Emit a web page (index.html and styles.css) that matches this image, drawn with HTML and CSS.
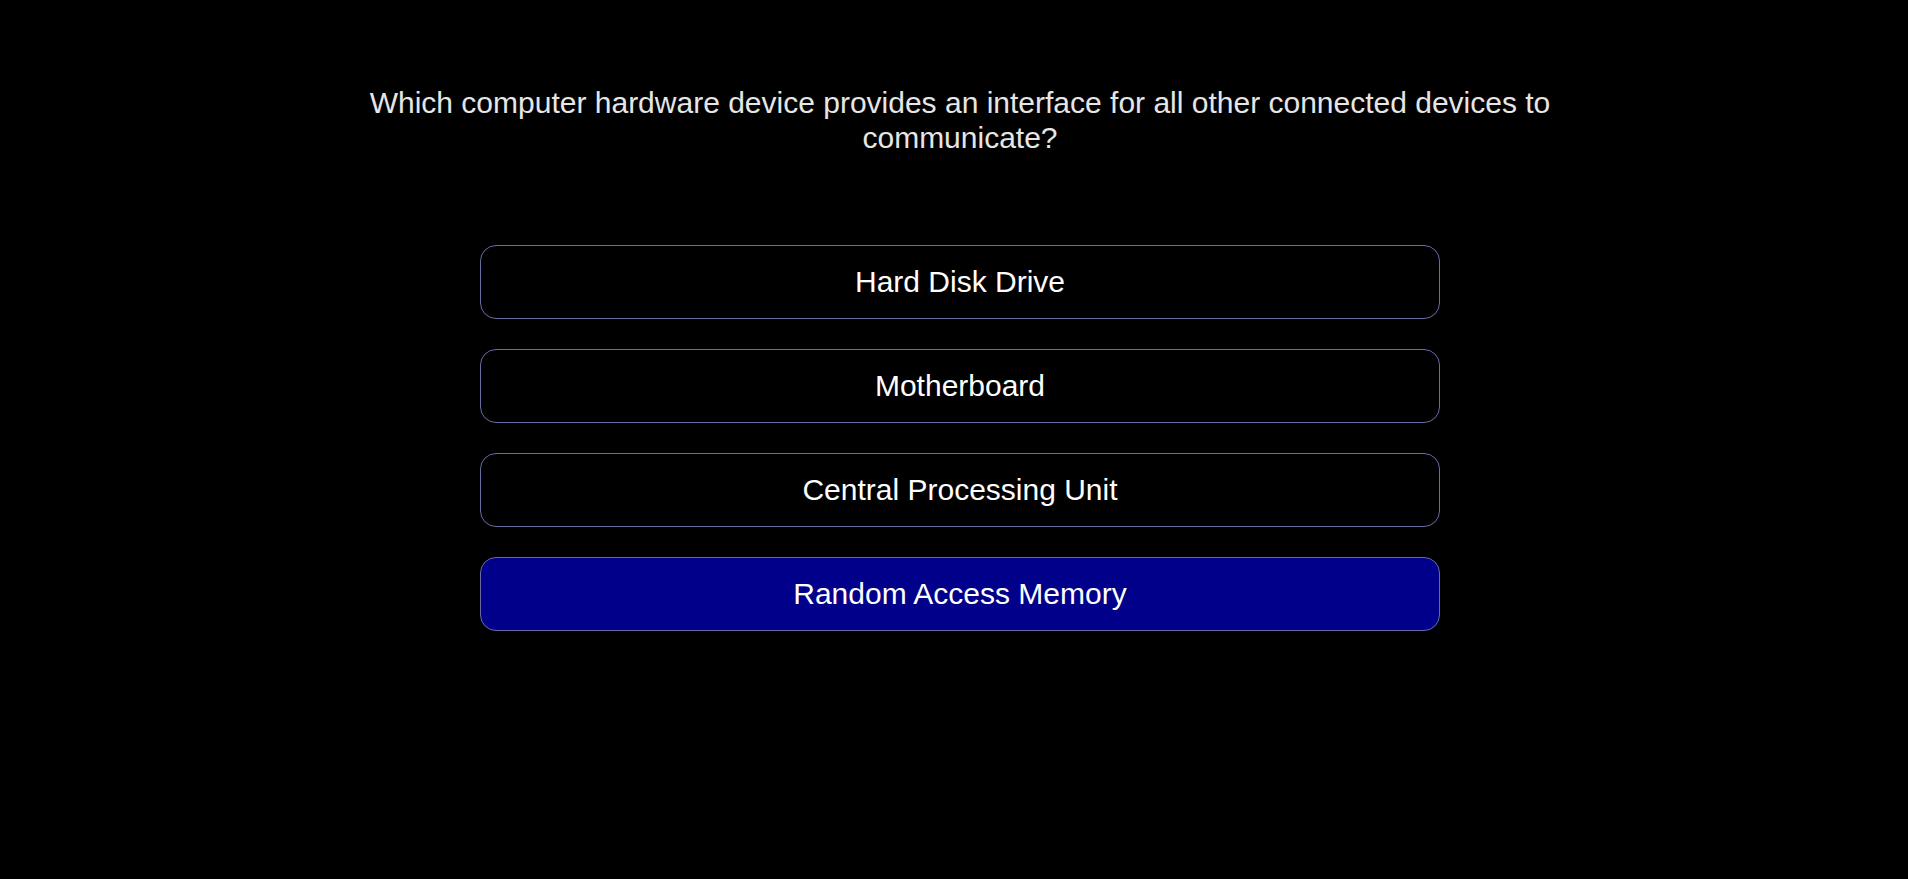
FILE: index.html
```html
<!DOCTYPE html>
<html lang="en">
<head>
<meta charset="utf-8">
<title>Quiz</title>
<link rel="stylesheet" href="styles.css">
</head>
<body>
<main class="quiz">
  <h1 class="question">Which computer hardware device provides an interface for all other connected devices to communicate?</h1>
  <div class="answers">
    <button class="answer">Hard Disk Drive</button>
    <button class="answer">Motherboard</button>
    <button class="answer">Central Processing Unit</button>
    <button class="answer answer-selected">Random Access Memory</button>
  </div>
</main>
</body>
</html>
```

FILE: styles.css
```css
html, body {
  margin: 0;
  padding: 0;
  background: #000;
}

body {
  font-family: "Liberation Sans", Arial, sans-serif;
  min-height: 879px;
}

.quiz {
  display: flex;
  flex-direction: column;
  align-items: center;
  padding: 86px 0 0 12px;
}

.question {
  margin: 0;
  max-width: 1240px;
  font-size: 30px;
  font-weight: normal;
  line-height: 34.5px;
  color: #e6e6e6;
  text-align: center;
}

.answers {
  display: flex;
  flex-direction: column;
  align-items: center;
  gap: 30px;
  margin-top: 90px;
}

.answer {
  box-sizing: border-box;
  width: 960px;
  height: 74px;
  border: 1px solid #686ca3;
  border-radius: 16px;
  background: #000;
  color: #fff;
  font-family: "Liberation Sans", Arial, sans-serif;
  font-size: 30px;
  padding: 0;
  cursor: pointer;
}

.answer-selected {
  background: #00008b;
}
```
